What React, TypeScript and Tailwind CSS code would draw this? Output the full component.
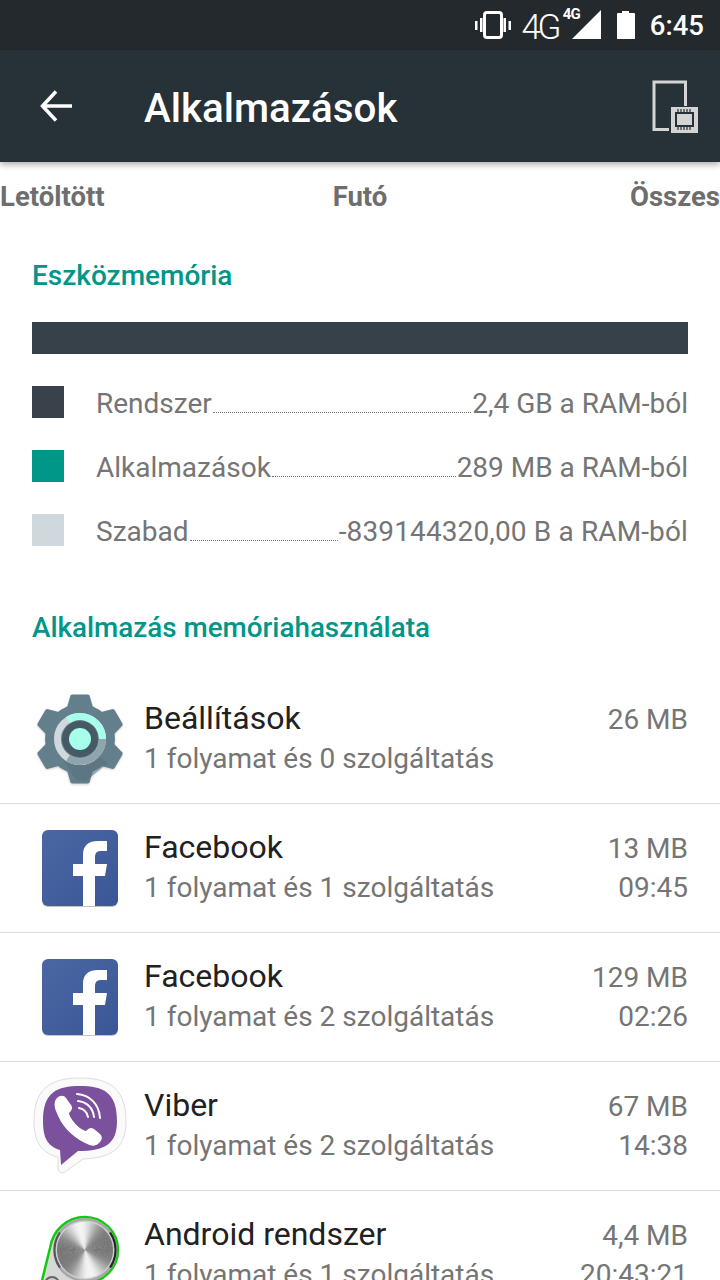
import React from "react";

const font = { fontFamily: "Roboto, sans-serif" };

function Gear() {
  const teeth = [0, 60, 120, 180, 240, 300];
  return (
    <svg width="92" height="92" viewBox="0 0 92 92" className="drop-shadow-[0_1px_1px_rgba(0,0,0,0.2)]">
      <g fill="#647f8c">
        {teeth.map((a) => (
          <path key={a} d="M36.500 2.500 Q37 1.500 39 1.500 H53 Q55 1.500 55.500 2.500 L60 18 H32 Z" transform={`rotate(${a} 46 46)`} />
        ))}
        <circle cx="46" cy="46" r="35" />
      </g>
      <path d="M66 64 L74 70 L52 88 L42 87 L29 66 Z" fill="#546e7a" opacity="0.5" />
      <circle cx="46" cy="46" r="22.500" fill="none" stroke="#cfd8dc" strokeWidth="7" />
      <path d="M68.500 46 A22.500 22.500 0 0 1 34 65" fill="none" stroke="#90a4ae" strokeWidth="7" />
      <path d="M34 27 A22.500 22.500 0 0 1 68.500 46" fill="none" stroke="#a7ffeb" strokeWidth="7" />
      <circle cx="46" cy="46" r="18" fill="#455a64" />
      <circle cx="46" cy="46" r="11" fill="#a7ffeb" />
    </svg>
  );
}

function Fb({ id }: { id: string }) {
  return (
    <svg width="76" height="78" viewBox="0 0 76 78" className="mt-[2px]">
      <defs>
        <linearGradient id={id} x1="0" y1="0" x2="1" y2="1">
          <stop offset="0" stopColor="#4a67a3" />
          <stop offset="1" stopColor="#3b5696" />
        </linearGradient>
      </defs>
      <rect x="0" y="1" width="76" height="76" rx="6" fill="#c4c4c4" />
      <rect x="0" y="0" width="76" height="76" rx="6" fill={`url(#${id})`} />
      <path d="M41 76 V46 H31 V34 H41 V25 C41 15 47 11 56 11 H65 V21 H59 C55 21 53 23 53 27 V34 H65 L63 46 H53 V76 Z" fill="#fff" />
    </svg>
  );
}

function Viber() {
  return (
    <svg width="94" height="98" viewBox="0 0 94 98">
      <path d="M47 1 C72 1 93 8 93 44 C93 72 78 81 50 82 L32 95 Q26 98 25 91 L25 80 C8 76 1 64 1 44 C1 8 22 1 47 1 Z" fill="#fafafa" stroke="#dedede" strokeWidth="1" />
      <path d="M47 9 C70 9 84 15 84 44 C84 67 72 74 45 74 L28 88 L27 73 C14 69 10 60 10 44 C10 15 24 9 47 9 Z" fill="#7b519d" />
      <path d="M24 21 C27 18 31 18 33 21 L38 28 C40 31 39 33 36 36 C36 40 45 52 53 54 C56 51 58 50 61 52 L67 57 C70 60 69 63 66 66 C62 70 58 69 52 66 C38 59 28 48 23 34 C21 29 21 24 24 21 Z" fill="#fff" />
      <g fill="none" stroke="#fff" strokeWidth="2" strokeLinecap="round">
        <path d="M44 17 C57 18 66 27 67 41" />
        <path d="M45 24 C54 25 60 31 61 40" />
        <path d="M46 31 C51 32 54 35 55 40" />
      </g>
    </svg>
  );
}

function AndroidIcon() {
  const cx = 52;
  const cy = 41;
  const r = 28;
  const n = 72;
  const wedges = Array.from({ length: n }, (_, i) => {
    const a0 = (i / n) * Math.PI * 2;
    const a1 = ((i + 1.2) / n) * Math.PI * 2;
    const mid = (a0 + a1) / 2 + 0.2;
    const v = Math.round(120 + 125 * Math.pow(Math.abs(Math.sin(mid)), 4));
    return {
      d: `M${cx} ${cy} L${cx + r * Math.cos(a0)} ${cy + r * Math.sin(a0)} L${cx + r * Math.cos(a1)} ${cy + r * Math.sin(a1)} Z`,
      c: `rgb(${v},${v},${v})`,
    };
  });
  return (
    <svg width="94" height="92" viewBox="0 0 94 92" className="block blur-[0.4px]">
      <path d="M52 8 C70 8 85 23 85 41 C85 59 70 74 52 74 L4 92 L17 39 C20 21 34 8 52 8 Z" fill="#d8d8d8" stroke="#14c814" strokeWidth="2.500" />
      <circle cx={cx} cy={cy} r="32" fill="#a8a8a8" />
      <path d="M78 23 A32 32 0 0 1 78 59 L72 56 A27 27 0 0 0 72 26 Z" fill="#222222" />
      <path d="M26 23 A32 32 0 0 0 26 59 L32 56 A27 27 0 0 1 32 26 Z" fill="#555555" />
      <circle cx={cx} cy={cy} r="29.500" fill="#cfcfcf" />
      {wedges.map((w, i) => (
        <path key={i} d={w.d} fill={w.c} />
      ))}
      <circle cx="19" cy="75" r="7" fill="#cccccc" stroke="#666666" strokeWidth="2" />
    </svg>
  );
}

function Row({ icon, name, sub, size, time }: { icon: React.ReactNode; name: string; sub: string; size: string; time?: string }) {
  return (
    <div className="flex h-[129px] border-b border-[#dcdcdc]">
      <div className="w-[144px] shrink-0 flex items-center pr-[16px]">
        <div className="w-[160px] shrink-0 flex justify-center">{icon}</div>
      </div>
      <div className="flex-1 flex justify-between pr-[32px] pt-[21px]">
        <div>
          <div className="text-[32px] leading-[44px] text-[#212121]">{name}</div>
          <div className="text-[28px] leading-[36px] text-[#757575] mt-[1px]">{sub}</div>
        </div>
        <div className="text-right text-[28px] text-[#757575] leading-[39px] pt-[4px]">
          <div>{size}</div>
          {time && <div>{time}</div>}
        </div>
      </div>
    </div>
  );
}

function Legend({ color, label, value, valueClass }: { color: string; label: string; value: string; valueClass?: string }) {
  return (
    <div className="flex items-center h-[32px] mb-[32px] text-[28px] text-[#757575]">
      <div className="w-[32px] h-[32px] shrink-0" style={{ backgroundColor: color }} />
      <span className="ml-[32px] mt-[3px] shrink-0">{label}</span>
      <span className="flex-1 self-end border-b border-dotted border-[#757575] mb-[5px] mx-[1px]" />
      <span className={`mt-[3px] shrink-0 ${valueClass ?? ""}`}>{value}</span>
    </div>
  );
}

export default function App() {
  return (
    <div className="w-[720px] h-[1280px] overflow-hidden bg-white relative" style={font}>
      <div className="h-[50px] bg-[#23292c] flex items-center justify-end text-white">
        <svg width="36" height="28" viewBox="0 0 36 28" className="mr-[11px]" fill="#fff">
          <rect x="9.500" y="1.500" width="17" height="25" rx="2.500" fill="none" stroke="#fff" strokeWidth="3" />
          <rect x="5" y="7" width="2.500" height="14" />
          <rect x="28.500" y="7" width="2.500" height="14" />
          <rect x="0" y="10" width="2.500" height="9" />
          <rect x="33.500" y="10" width="2.500" height="9" />
        </svg>
        <span className="text-[35px] font-light leading-none tracking-[-3.500px] mt-[4px]">4G</span>
        <div className="relative w-[38px] h-[30px] ml-[5px] mt-[-2px]">
          <svg width="29" height="29" viewBox="0 0 29 29" className="absolute right-0 bottom-0" fill="#fff">
            <path d="M29 0 V29 H0 Z" />
          </svg>
          <span className="absolute left-[0px] top-[-2px] text-[15px] font-bold leading-none tracking-[-1px]">4G</span>
        </div>
        <svg width="20" height="30" viewBox="0 0 20 30" className="ml-[15px]" fill="#fff">
          <path d="M6 1 H13 V3 H18 Q19 3 19 4 V29 H1 V4 Q1 3 2 3 H6 Z" />
        </svg>
        <span className="text-[27.500px] font-medium ml-[14px] mr-[16px] mt-[1px]">6:45</span>
      </div>

      <div className="h-[112px] bg-[#263238] flex items-center relative z-10 shadow-[0_3px_6px_rgba(0,0,0,0.3)]">
        <svg width="32" height="32" viewBox="0 0 32 32" className="ml-[40px]" fill="none" stroke="#fff" strokeWidth="3.500">
          <path d="M32 16 H2.500 M16 1.500 L2.500 16 L16 30.500" />
        </svg>
        <span className="text-[40.300px] font-medium text-white ml-[72px] flex-1 leading-none mt-[6px]">Alkalmazások</span>
        <svg width="46" height="54" viewBox="0 0 46 54" className="mr-[22px] mt-[2px]">
          <path d="M33.500 26 V2 H2 V49.500 H17" fill="none" stroke="#d4d4d4" strokeWidth="3" />
          <rect x="19" y="27" width="27" height="26" fill="#d4d4d4" />
          <rect x="24" y="33" width="17" height="13" fill="#d4d4d4" stroke="#263238" strokeWidth="2" />
          <path d="M26 32 V29 M29 32 V29 M32 32 V29 M35 32 V29 M38 32 V29 M26 50 V47 M29 50 V47 M32 50 V47 M35 50 V47 M38 50 V47" stroke="#263238" strokeWidth="1.200" />
        </svg>
      </div>

      <div className="grid grid-cols-3 text-[27.500px] font-bold text-[#6e6e6e] leading-none pt-[21px] h-[68px]">
        <span>Letöltött</span>
        <span className="text-center">Futó</span>
        <span className="text-right">Összes</span>
      </div>

      <div className="px-[32px]">
        <div className="text-[28px] font-medium text-[#009688] leading-[32px] pt-[30px]">Eszközmemória</div>
        <div className="h-[32px] bg-[#37414a] mt-[30px] mb-[32px]" />
        <Legend color="#39424b" label="Rendszer" value="2,4 GB a RAM-ból" />
        <Legend color="#009688" label="Alkalmazások" value="289 MB a RAM-ból" />
        <Legend color="#cfd8dc" label="Szabad" value="-839144320,00 B a RAM-ból" valueClass="tracking-[0.13px]" />
        <div className="text-[27.800px] font-medium text-[#009688] leading-[32px] pt-[34px]">Alkalmazás memóriahasználata</div>
      </div>

      <div className="mt-[31px]">
        <Row icon={<Gear />} name="Beállítások" sub="1 folyamat és 0 szolgáltatás" size="26 MB" />
        <Row icon={<Fb id="fb1" />} name="Facebook" sub="1 folyamat és 1 szolgáltatás" size="13 MB" time="09:45" />
        <Row icon={<Fb id="fb2" />} name="Facebook" sub="1 folyamat és 2 szolgáltatás" size="129 MB" time="02:26" />
        <Row icon={<Viber />} name="Viber" sub="1 folyamat és 2 szolgáltatás" size="67 MB" time="14:38" />
        <Row icon={<AndroidIcon />} name="Android rendszer" sub="1 folyamat és 1 szolgáltatás" size="4,4 MB" time="20:43:21" />
      </div>
    </div>
  );
}
